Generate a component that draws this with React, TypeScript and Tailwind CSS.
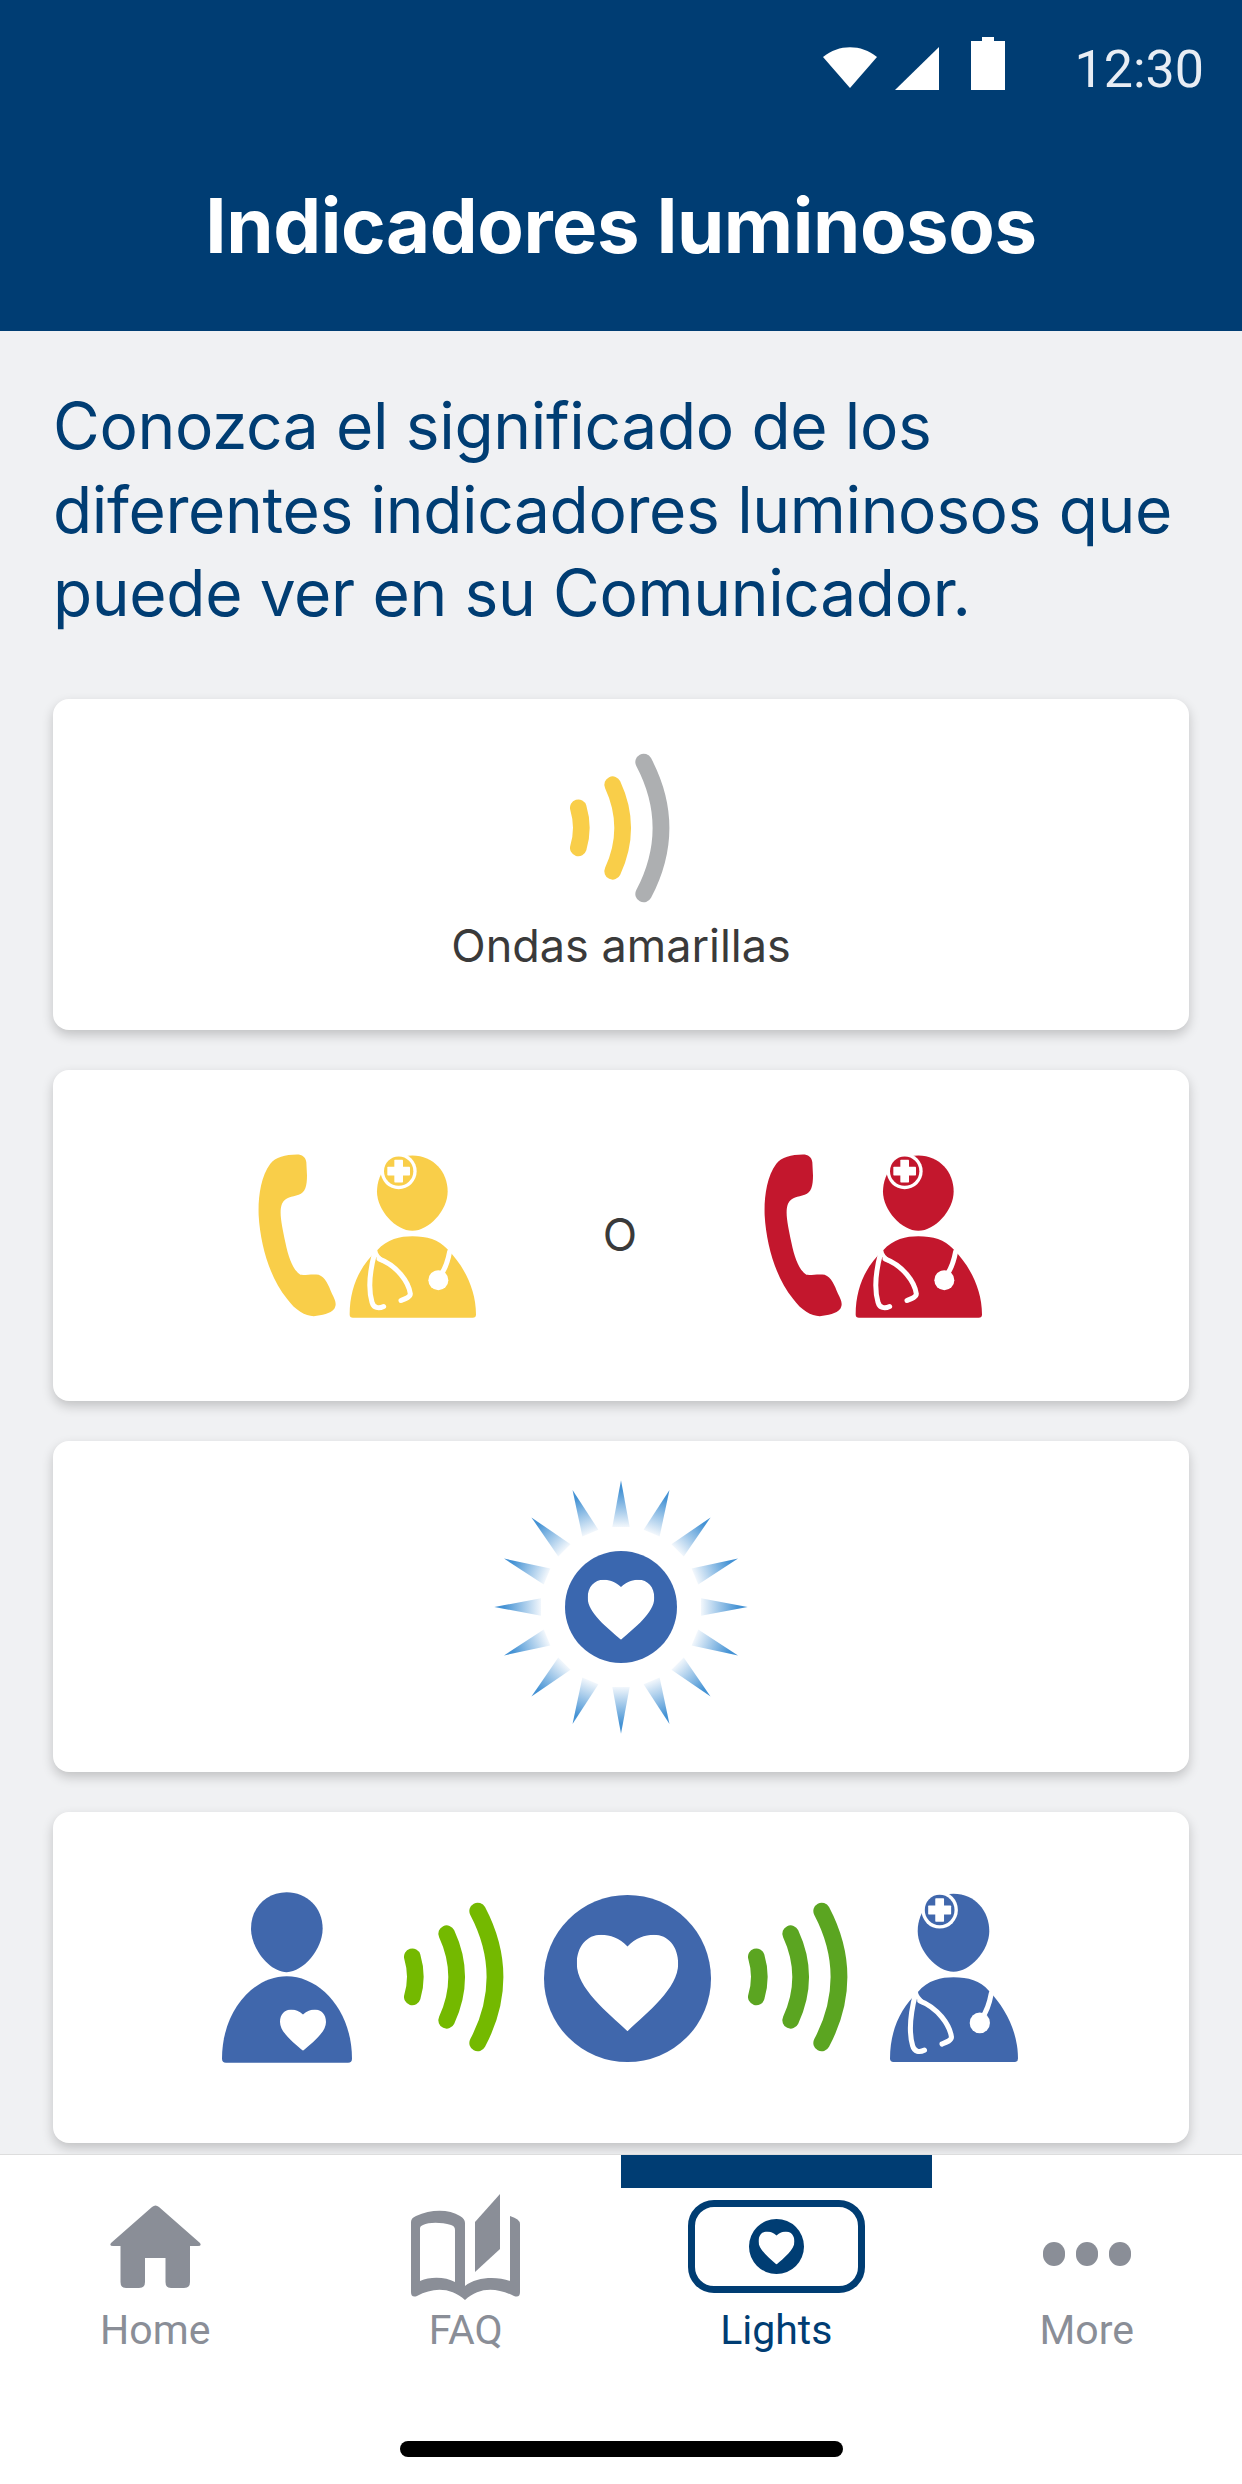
const NAVY = "#003D73";
const GRAY = "#8A8E97";
const BLUE = "#4067AC";

const HEART =
  "M50 11 C42 3 33 0 24 0 C10 0 0 11 0 27 C0 50 30 72 50 90 C70 72 100 50 100 27 C100 11 90 0 76 0 C67 0 58 3 50 11Z";

function Heart({ x, y, w, h, fill = "#fff" }: { x: number; y: number; w: number; h: number; fill?: string }) {
  return (
    <svg x={x} y={y} width={w} height={h} viewBox="0 0 100 90" preserveAspectRatio="none">
      <path d={HEART} fill={fill} />
    </svg>
  );
}

function Waves({ colors }: { colors: [string, string, string] }) {
  return (
    <svg width="100" height="152" viewBox="449 95 300 455" preserveAspectRatio="none" fill="none" strokeWidth="50" strokeLinecap="round" className="shrink-0">
      <path d="M474 262 Q492 322 474 382" stroke={colors[0]} />
      <path d="M577 193 Q637 322 577 452" stroke={colors[1]} />
      <path d="M670 125 Q774 322 670 520" stroke={colors[2]} />
    </svg>
  );
}

function DoctorShape({ color }: { color: string }) {
  return (
    <>
      <path d="M546 110 C610 110 652 160 652 218 C652 275 595 336 546 336 C497 336 440 275 440 218 C440 160 482 110 546 110Z" fill={color} />
      <circle cx="505" cy="157" r="54" fill="#fff" />
      <circle cx="505" cy="157" r="44" fill={color} />
      <rect x="492" y="123" width="26" height="68" rx="2" fill="#fff" />
      <rect x="471" y="144" width="68" height="26" rx="2" fill="#fff" />
      <path d="M358 587 C358 505 390 440 440 395 C470 360 510 352 546 352 C590 352 625 362 650 390 C700 440 737 510 737 587 Q737 597 727 597 L368 597 Q358 597 358 587Z" fill={color} />
      <g fill="none" stroke="#fff" strokeWidth="15" strokeLinecap="round">
        <path d="M434 398 C420 450 413 510 425 550 C430 568 445 570 460 563" />
        <path d="M446 420 C500 440 535 490 540 525 C540 535 525 540 512 545" />
        <path d="M658 398 C652 430 645 450 630 470" />
        <path d="M432 395 Q440 412 454 424" strokeWidth="12" />
      </g>
      <circle cx="624" cy="484" r="30" fill="#fff" />
    </>
  );
}

function CallDoctor({ color }: { color: string }) {
  return (
    <svg width="220" height="167" viewBox="80 100 660 500" className="shrink-0">
      <path
        d="M200 107 C165 107 135 115 120 135 C90 175 83 240 85 290 C90 380 120 480 170 540 C195 575 225 592 250 592 C275 590 300 585 312 570 C320 555 315 545 305 525 C295 500 285 475 265 468 C245 465 225 470 210 468 C190 455 175 420 165 370 C155 320 145 280 155 255 C165 235 185 235 205 228 C225 222 230 200 230 170 L228 130 C226 115 215 107 200 107Z"
        fill={color}
      />
      <DoctorShape color={color} />
    </svg>
  );
}

function SunHeart() {
  const angles = Array.from({ length: 16 }, (_, i) => i * 22.5);
  return (
    <svg width="260" height="260" viewBox="0 0 780 780" className="mt-[2px]">
      <defs>
        <linearGradient id="ray" gradientUnits="userSpaceOnUse" x1="390" y1="10" x2="390" y2="150">
          <stop offset="0.2" stopColor="#4492D4" />
          <stop offset="1" stopColor="#F2F7FC" />
        </linearGradient>
      </defs>
      {angles.map((a) => (
        <path key={a} d="M390 10 L416 150 L364 150Z" fill="url(#ray)" transform={`rotate(${a} 390 390)`} />
      ))}
      <circle cx="390" cy="390" r="168" fill="#3A67AF" />
      <Heart x={290} y={308} w={200} h={180} />
    </svg>
  );
}

function Patient() {
  return (
    <svg width="130" height="171" viewBox="66 95 390 512" className="shrink-0">
      <path d="M260 95 C320 95 368 140 368 205 C368 265 310 335 260 335 C210 335 153 265 153 205 C153 140 200 95 260 95Z" fill={BLUE} />
      <path d="M66 595 C66 450 160 347 260 347 C360 347 456 450 456 595 Q456 607 444 607 L78 607 Q66 607 66 595Z" fill={BLUE} />
      <Heart x={240} y={447} w={138} h={124} />
    </svg>
  );
}

function Card({ children, className }: { children: React.ReactNode; className?: string }) {
  return (
    <div className={`h-[331px] rounded-[16px] bg-white shadow-[0_5px_12px_rgba(0,0,0,0.2)] flex ${className}`}>
      {children}
    </div>
  );
}

function Tab({ label, active, children }: { label: string; active?: boolean; children: React.ReactNode }) {
  return (
    <div className="flex flex-col items-center">
      <div className={`h-[33px] w-full ${active ? "bg-[#003D73]" : ""}`} />
      <div className="h-[117px] flex items-center justify-center">{children}</div>
      <p className={`text-[41px] leading-[50px] ${active ? "text-[#003D73]" : "text-[#8A8E97]"}`}>{label}</p>
    </div>
  );
}

export default function App() {
  return (
    <div className="w-[1242px] h-[2484px] flex flex-col overflow-hidden bg-[#F0F1F3] font-['Inter',sans-serif]">
      <header className="h-[331px] shrink-0 bg-[#003D73] text-white">
        <div className="h-[180px] pr-[38px] pt-[37px] flex justify-end items-start">
          <svg width="54" height="41" viewBox="0 0 54 41" className="mt-[10px]">
            <path d="M0 10 C16 -3 38 -3 54 10 L27 41Z" fill="#fff" />
          </svg>
          <svg width="44" height="43" viewBox="0 0 44 43" className="ml-[18px] mt-[10px]">
            <path d="M44 0 L44 43 L0 43Z" fill="#fff" />
          </svg>
          <svg width="34" height="53" viewBox="0 0 34 53" className="ml-[32px]">
            <path d="M11 0 H23 V4 H34 V53 H0 V4 H11Z" fill="#fff" />
          </svg>
          <span className="ml-[70px] mt-[3px] text-[52px] leading-[60px] font-['Roboto',sans-serif] text-[#E8EDF4] whitespace-nowrap">12:30</span>
        </div>
        <h1 className="text-center text-[76px] leading-[90px] font-bold tracking-[-0.4px]">Indicadores luminosos</h1>
      </header>

      <main className="flex-1 min-h-0 overflow-hidden px-[53px] pt-[53px]">
        <p className="text-[64px] leading-[83.5px] tracking-[-0.35px] text-[#003D73]">
          Conozca el significado de los
          <br />
          diferentes indicadores luminosos que
          <br />
          puede ver en su Comunicador.
        </p>
        <div className="mt-[64px] flex flex-col gap-[40px]">
          <Card className="flex-col items-center pt-[53px]">
            <div className="mr-[3px]">
              <Waves colors={["#F9CE49", "#F9CE49", "#ADAFB1"]} />
            </div>
            <p className="mt-[17px] text-[45px] leading-[50px] text-[#3A3A3A]">Ondas amarillas</p>
          </Card>
          <Card className="items-center justify-center pr-[2px]">
            <CallDoctor color="#F9CE49" />
            <span className="w-[286px] text-center text-[45px] leading-[50px] text-[#3A3A3A]">O</span>
            <CallDoctor color="#C3172D" />
          </Card>
          <Card className="items-center justify-center">
            <SunHeart />
          </Card>
          <Card className="items-center justify-center pr-[2px]">
            <Patient />
            <div className="ml-[52px]">
              <Waves colors={["#74B900", "#74B900", "#74B900"]} />
            </div>
            <svg width="167" height="167" viewBox="0 0 168 168" className="ml-[40px] mt-[2px] shrink-0">
              <circle cx="84" cy="84" r="84" fill={BLUE} />
              <Heart x={33} y={40} w={102} h={97} />
            </svg>
            <div className="ml-[37px]">
              <Waves colors={["#5BA521", "#5BA521", "#5BA521"]} />
            </div>
            <svg width="130" height="171" viewBox="355 105 385 495" preserveAspectRatio="none" className="ml-[41px] shrink-0">
              <DoctorShape color={BLUE} />
            </svg>
          </Card>
        </div>
      </main>

      <nav className="h-[330px] shrink-0 bg-white border-t border-[#DDDDDD] flex flex-col">
        <div className="grid grid-cols-4 font-['Roboto',sans-serif]">
          <Tab label="Home">
            <svg width="91" height="83" viewBox="0 0 91 83">
              <path
                d="M42 2 Q45.5 -1 49 2 L90 38 Q92 41 88 41 L80 41 L80 77 Q80 83 74 83 L61 83 Q55.5 83 55.5 77 L55.5 53 L35 53 L35 77 Q35 83 29 83 L16 83 Q10.5 83 10.5 77 L10.5 41 L3 41 Q-1 41 1 38Z"
                fill={GRAY}
              />
            </svg>
          </Tab>
          <Tab label="FAQ">
            <svg width="109" height="106" viewBox="0 0 109 106">
              <path
                fillRule="evenodd"
                d="M0 28 Q0 24 5 22 C20 15 38 15 49 22 Q54 25 54 29 L54 92 C65 83 85 82 99 87 L99 22 Q109 25 109 30 L109 98 Q109 104 103 102 C85 93 68 93 54 106 C40 93 22 93 6 102 Q0 104 0 98Z M9 34 L9 87 C20 82 35 83 44 88 L44 36 Q44 32 40 31 C30 28 18 28 12 31 Q9 32 9 34Z"
                fill={GRAY}
              />
              <path d="M64 28 L89 0 L89 55 L64 78Z" fill={GRAY} />
            </svg>
          </Tab>
          <Tab label="Lights" active>
            <div className="w-[177px] h-[93px] rounded-[26px] border-[7px] border-[#003D73] flex items-center justify-center">
              <svg width="55" height="55" viewBox="0 0 55 55">
                <circle cx="27.5" cy="27.5" r="27.5" fill={NAVY} />
                <Heart x={9.5} y={12.5} w={36} h={33} />
              </svg>
            </div>
          </Tab>
          <Tab label="More">
            <div className="mt-[14px] flex gap-[11px]">
              <div className="w-[22px] h-[24px] rounded-full bg-[#8A8E97]" />
              <div className="w-[22px] h-[24px] rounded-full bg-[#8A8E97]" />
              <div className="w-[22px] h-[24px] rounded-full bg-[#8A8E97]" />
            </div>
          </Tab>
        </div>
        <div className="mt-[86px] flex justify-center">
          <div className="w-[443px] h-[16px] rounded-full bg-black" />
        </div>
      </nav>
    </div>
  );
}
